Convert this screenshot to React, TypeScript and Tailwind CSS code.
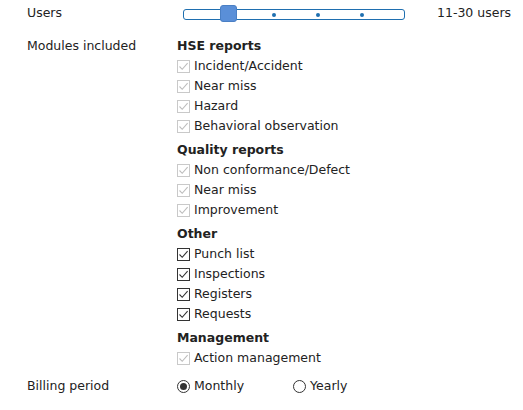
const groups = [
  {
    title: "HSE reports",
    items: [
      { label: "Incident/Accident", locked: true },
      { label: "Near miss", locked: true },
      { label: "Hazard", locked: true },
      { label: "Behavioral observation", locked: true },
    ],
  },
  {
    title: "Quality reports",
    items: [
      { label: "Non conformance/Defect", locked: true },
      { label: "Near miss", locked: true },
      { label: "Improvement", locked: true },
    ],
  },
  {
    title: "Other",
    items: [
      { label: "Punch list", locked: false },
      { label: "Inspections", locked: false },
      { label: "Registers", locked: false },
      { label: "Requests", locked: false },
    ],
  },
  {
    title: "Management",
    items: [{ label: "Action management", locked: true }],
  },
];

const CheckBox = ({ locked }: { locked: boolean }) => (
  <span
    className={
      "flex h-[13px] w-[13px] shrink-0 items-center justify-center border " +
      (locked ? "border-[#c9c9c9] bg-white" : "border-[#333333] bg-white")
    }
  >
    <svg width="11" height="11" viewBox="0 0 11 11">
      <path
        d="M1.5 5.5 L4.2 8.3 L9.6 2.2"
        fill="none"
        stroke={locked ? "#bdbdbd" : "#333333"}
        strokeWidth="1.1"
      />
    </svg>
  </span>
);

const Radio = ({ on }: { on: boolean }) => (
  <span className="flex h-[13px] w-[13px] shrink-0 items-center justify-center rounded-full border border-[#333333] bg-white">
    {on && <span className="h-[7px] w-[7px] rounded-full bg-[#333333]" />}
  </span>
);

const Slider = () => (
  <div className="relative h-[17px] w-[222px]">
    <div className="absolute left-0 right-0 top-[4px] h-[11px] rounded-[3px] border border-[#1f6fb0] bg-white" />
    {[89, 133, 177].map((x) => (
      <span
        key={x}
        className="absolute top-[8px] h-[4px] w-[4px] rounded-full bg-[#1f6fb0]"
        style={{ left: x }}
      />
    ))}
    <div className="absolute left-[37px] top-0 h-[17px] w-[17px] rounded-[3px] border border-[#4a7fc4] bg-[#5a8fd8]" />
  </div>
);

export default function App() {
  return (
    <div
      className="min-h-screen bg-white pl-[27px] pt-[3px] text-[12.5px] text-[#222222]"
      style={{ fontFamily: '"DejaVu Sans", Verdana, sans-serif' }}
    >
      <div className="flex h-[20px] items-center">
        <div className="w-[150px] pt-[1px]">Users</div>
        <div className="ml-[6px]">
          <Slider />
        </div>
        <div className="ml-[32px] pt-[1px]">11-30 users</div>
      </div>

      <div className="mt-[13px] flex">
        <div className="w-[150px] leading-[20px]">Modules included</div>
        <div className="flex flex-col">
          {groups.map((g, i) => (
            <div key={g.title} className={i > 0 ? "mt-[4px]" : ""}>
              <div className="font-bold leading-[20px]">{g.title}</div>
              {g.items.map((it) => (
                <label key={it.label} className="flex h-[20px] items-center gap-[4px]">
                  <CheckBox locked={it.locked} />
                  <span>{it.label}</span>
                </label>
              ))}
            </div>
          ))}
        </div>
      </div>

      <div className="mt-[8px] flex h-[20px] items-center">
        <div className="w-[150px]">Billing period</div>
        <label className="flex items-center gap-[4px]">
          <Radio on />
          <span>Monthly</span>
        </label>
        <label className="ml-[49px] flex items-center gap-[4px]">
          <Radio on={false} />
          <span>Yearly</span>
        </label>
      </div>
    </div>
  );
}
